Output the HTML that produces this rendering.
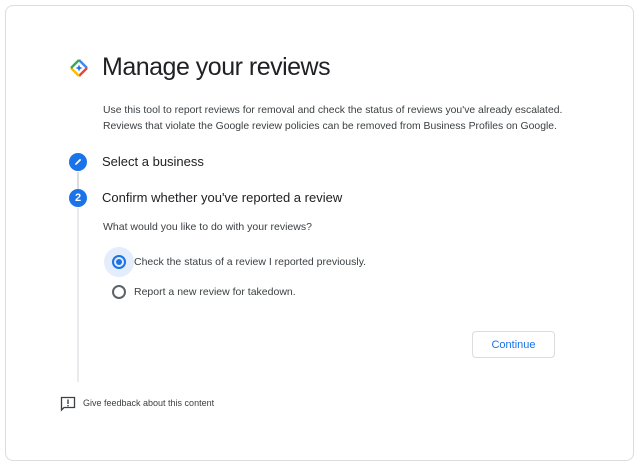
<!DOCTYPE html>
<html><head><meta charset="utf-8"><style>
*{margin:0;padding:0;box-sizing:border-box}
body{width:640px;height:468px;background:#fff;font-family:"Liberation Sans",sans-serif;color:#202124;position:relative;overflow:hidden}
.card{position:absolute;left:5px;top:5px;width:629px;height:456px;border:1px solid #dadce0;border-radius:8px}
.abs{position:absolute;white-space:nowrap}
</style></head><body>
<div class="card"></div>
<svg class="abs" style="left:69px;top:58px" width="20" height="20" viewBox="0 0 20 20">
<path d="M10 2 L18 10" stroke="#4285f4" stroke-width="2.4" fill="none"/>
<path d="M18 10 L10 18" stroke="#ea4335" stroke-width="2.4" fill="none"/>
<path d="M10 18 L2 10" stroke="#fbbc04" stroke-width="2.4" fill="none"/>
<path d="M2 10 L10 2" stroke="#34a853" stroke-width="2.4" fill="none"/>
<path d="M10 6.5 L11 9 L13.5 10 L11 11 L10 13.5 L9 11 L6.5 10 L9 9Z" fill="#1a73e8"/>
</svg>
<div class="abs" style="left:102px;top:53px;font-size:25px;letter-spacing:-0.5px">Manage your reviews</div>
<div class="abs" style="left:103px;top:103px;font-size:10.4px;line-height:16px;color:#3c4043">Use this tool to report reviews for removal and check the status of reviews you've already escalated.<br>Reviews that violate the Google review policies can be removed from Business Profiles on Google.</div>
<div class="abs" style="left:77px;top:172px;width:2px;height:17px;background:#dadce0"></div>
<div class="abs" style="left:77px;top:208px;width:2px;height:174px;background:#e8eaed"></div>
<div class="abs" style="left:69px;top:153px;width:18px;height:18px;border-radius:50%;background:#1a73e8"></div>
<svg class="abs" style="left:73px;top:157px" width="10" height="10" viewBox="0 0 10 10"><path d="M2 8 L2.5 6.3 L7 1.8 L8.2 3 L3.7 7.5Z" fill="#fff"/></svg>
<div class="abs" style="left:102px;top:154px;font-size:13px">Select a business</div>
<div class="abs" style="left:69px;top:189px;width:18px;height:18px;border-radius:50%;background:#1a73e8;color:#fff;font-size:11px;font-weight:bold;text-align:center;line-height:18px">2</div>
<div class="abs" style="left:102px;top:190px;font-size:13px">Confirm whether you've reported a review</div>
<div class="abs" style="left:103px;top:221px;font-size:10.5px;color:#3c4043">What would you like to do with your reviews?</div>
<div class="abs" style="left:104px;top:247px;width:30px;height:30px;border-radius:50%;background:#e3edfb"></div>
<div class="abs" style="left:112px;top:255px;width:14px;height:14px;border-radius:50%;border:2px solid #1a73e8"></div>
<div class="abs" style="left:116px;top:259px;width:6px;height:6px;border-radius:50%;background:#1a73e8"></div>
<div class="abs" style="left:134px;top:256px;font-size:10.5px;color:#3c4043">Check the status of a review I reported previously.</div>
<div class="abs" style="left:112px;top:285px;width:14px;height:14px;border-radius:50%;border:2px solid #5f6368"></div>
<div class="abs" style="left:134px;top:286px;font-size:10.5px;color:#3c4043">Report a new review for takedown.</div>
<div class="abs" style="left:472px;top:331px;width:83px;height:27px;border:1px solid #dadce0;border-radius:4px;color:#1a73e8;font-size:11px;text-align:center;line-height:27px">Continue</div>
<svg class="abs" style="left:60px;top:396px" width="16" height="16" viewBox="0 0 16 16"><path d="M1.5 1.5 H14.5 V11.5 H4 L1.5 14Z" fill="none" stroke="#3c4043" stroke-width="1.3"/><rect x="7.3" y="3.5" width="1.4" height="4.5" fill="#3c4043"/><rect x="7.3" y="9" width="1.4" height="1.4" fill="#3c4043"/></svg>
<div class="abs" style="left:83px;top:398px;font-size:9px;color:#3c4043">Give feedback about this content</div>
</body></html>
